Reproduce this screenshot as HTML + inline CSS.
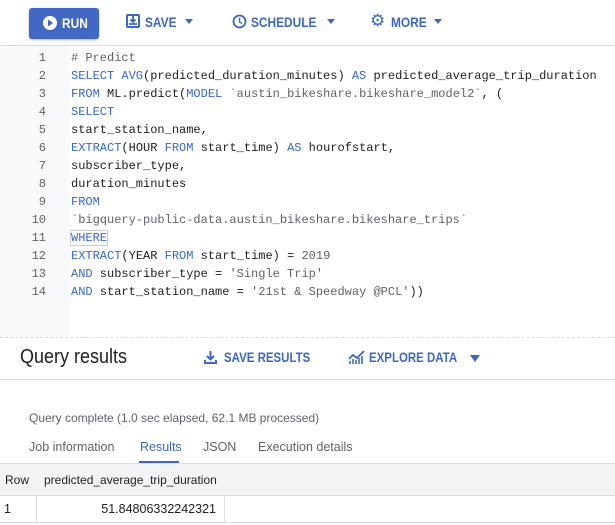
<!DOCTYPE html>
<html><head><style>
body{margin:0;width:615px;height:525px;background:#fff;font-family:"Liberation Sans",sans-serif;position:relative;overflow:hidden}
.a{position:absolute}
.c{transform:scaleX(0.85);transform-origin:0 0;white-space:nowrap}
.tb{color:#3b68c4;font-weight:bold;font-size:13.5px}
.code{font-family:"Liberation Mono",monospace;font-size:12px;color:#202124}
.ln{position:absolute;left:0;width:46px;text-align:right;color:#5f6368;font-family:"Liberation Mono",monospace;font-size:12px}
.k{color:#3367d6}.s{color:#5f6368}.n{color:#5f6368}
.ar{position:absolute;width:0;height:0;border-left:4.5px solid transparent;border-right:4.5px solid transparent;border-top:5px solid #3b68c4}
</style></head><body>
<div class="a" style="left:0;top:0;width:615px;height:45px;background:#fff;border-bottom:1px solid #dadce0"></div>
<div class="a" style="left:29px;top:8px;width:70px;height:31px;background:#4169c3;border-radius:3px;box-shadow:0 1px 2px rgba(0,0,0,.3)"></div>
<svg class="a" style="left:42px;top:15px" width="16" height="16"><circle cx="8" cy="8" r="7" fill="#fff"/><path d="M6 4.5L11 8L6 11.5Z" fill="#4169c3"/></svg>
<div class="a c" style="left:62px;top:15px;color:#fff;font-weight:bold;font-size:14px">RUN</div>
<svg class="a" style="left:126px;top:14px" width="14" height="14"><rect x="1" y="1" width="12" height="12" rx="1" fill="none" stroke="#3b68c4" stroke-width="2"/><path d="M7 2v6M4.5 5.5L7 8l2.5-2.5M3 10h8" stroke="#3b68c4" stroke-width="1.8" fill="none"/></svg>
<div class="a tb c" style="left:145px;top:14px;font-size:14px">SAVE</div><div class="ar" style="left:185px;top:19px"></div>
<svg class="a" style="left:232px;top:14px" width="15" height="15"><circle cx="7.5" cy="7.5" r="6" fill="none" stroke="#3b68c4" stroke-width="1.8"/><path d="M7.5 4v4l2.5 1.5" stroke="#3b68c4" stroke-width="1.5" fill="none"/></svg>
<div class="a tb c" style="left:251px;top:14px;font-size:14px">SCHEDULE</div><div class="ar" style="left:327px;top:19px"></div>
<div class="a" style="left:370px;top:11px;color:#3b68c4;font-size:17px">⚙</div>
<div class="a tb c" style="left:391px;top:14px;font-size:14px">MORE</div><div class="ar" style="left:434px;top:19px"></div>
<div class="a" style="left:0;top:46px;width:70px;height:291px;background:#f8f9fa"></div>
<div class="a" style="left:0;top:337px;width:615px;border-top:1px dashed #dadce0"></div>
<div class="a code" style="left:0;top:49px;width:615px;line-height:18px">
<div class="ln" style="top:0">1<br>2<br>3<br>4<br>5<br>6<br>7<br>8<br>9<br>10<br>11<br>12<br>13<br>14</div>
<div style="position:absolute;left:71px;top:0;white-space:pre"><span class="s"># Predict</span>
<span class="k">SELECT AVG</span>(predicted_duration_minutes) <span class="k">AS</span> predicted_average_trip_duration
<span class="k">FROM</span> ML.predict(<span class="k">MODEL</span> <span class="s">`austin_bikeshare.bikeshare_model2`</span>, (
<span class="k">SELECT</span>
start_station_name,
<span class="k">EXTRACT</span>(HOUR <span class="k">FROM</span> start_time) <span class="k">AS</span> hourofstart,
subscriber_type,
duration_minutes
<span class="k">FROM</span>
<span class="s">`bigquery-public-data.austin_bikeshare.bikeshare_trips`</span>
<span class="k" style="outline:1px solid #ccc">WHERE</span>
<span class="k">EXTRACT</span>(YEAR <span class="k">FROM</span> start_time) = <span class="n">2019</span>
<span class="k">AND</span> subscriber_type = <span class="s">'Single Trip'</span>
<span class="k">AND</span> start_station_name = <span class="s">'21st &amp; Speedway @PCL'</span>))</div></div>
<div class="a c" style="left:20px;top:346px;font-size:20px;color:#202124;transform:scaleX(0.9)">Query results</div>
<svg class="a" style="left:204px;top:350px" width="13" height="14"><path d="M6.5 1v8M3 6l3.5 3.5L10 6M1 10v3h11v-3" stroke="#3b68c4" stroke-width="2" fill="none"/></svg>
<div class="a tb c" style="left:224px;top:350px;font-size:13.5px">SAVE RESULTS</div>
<svg class="a" style="left:348px;top:350px" width="18" height="15"><path d="M1 9l4-4 4 3 7-7" stroke="#3b68c4" stroke-width="1.8" fill="none"/><path d="M2 14v-3M5 14v-5M8 14v-4M11 14v-6M14 14v-8" stroke="#3b68c4" stroke-width="1.6"/></svg>
<div class="a tb c" style="left:369px;top:350px;font-size:13.5px">EXPLORE DATA</div><div class="ar" style="left:470px;top:355px;border-left-width:5.5px;border-right-width:5.5px;border-top-width:7px"></div>
<div class="a" style="left:0;top:379px;width:615px;border-top:1px solid #dadce0"></div>
<div class="a" style="left:29px;top:411px;font-size:12px;color:#5f6368;white-space:nowrap">Query complete (1.0 sec elapsed, 62.1 MB processed)</div>
<div class="a" style="left:29px;top:440px;font-size:12.5px;color:#5f6368">Job information</div>
<div class="a" style="left:140px;top:440px;font-size:12.5px;color:#3b68c4">Results</div>
<div class="a" style="left:139px;top:461px;width:40px;height:3px;background:#3b68c4"></div>
<div class="a" style="left:203px;top:440px;font-size:12.5px;color:#5f6368">JSON</div>
<div class="a" style="left:258px;top:440px;font-size:12.5px;color:#5f6368">Execution details</div>
<div class="a" style="left:0;top:463px;width:615px;height:31px;background:#f1f3f4;border-top:1px solid #dadce0;border-bottom:1px solid #dadce0"></div>
<div class="a" style="left:5px;top:473px;font-size:12px;color:#202124">Row</div>
<div class="a" style="left:44px;top:473px;font-size:12px;color:#202124">predicted_average_trip_duration</div>
<div class="a" style="left:36px;top:495px;width:1px;height:28px;background:#dadce0"></div>
<div class="a" style="left:224px;top:495px;width:1px;height:28px;background:#dadce0"></div>
<div class="a" style="left:0;top:522px;width:615px;border-top:1px solid #dadce0"></div>
<div class="a" style="left:4px;top:502px;font-size:12.5px;color:#202124">1</div>
<div class="a" style="left:40px;top:502px;width:176px;text-align:right;font-size:12.5px;color:#202124">51.84806332242321</div>
</body></html>
